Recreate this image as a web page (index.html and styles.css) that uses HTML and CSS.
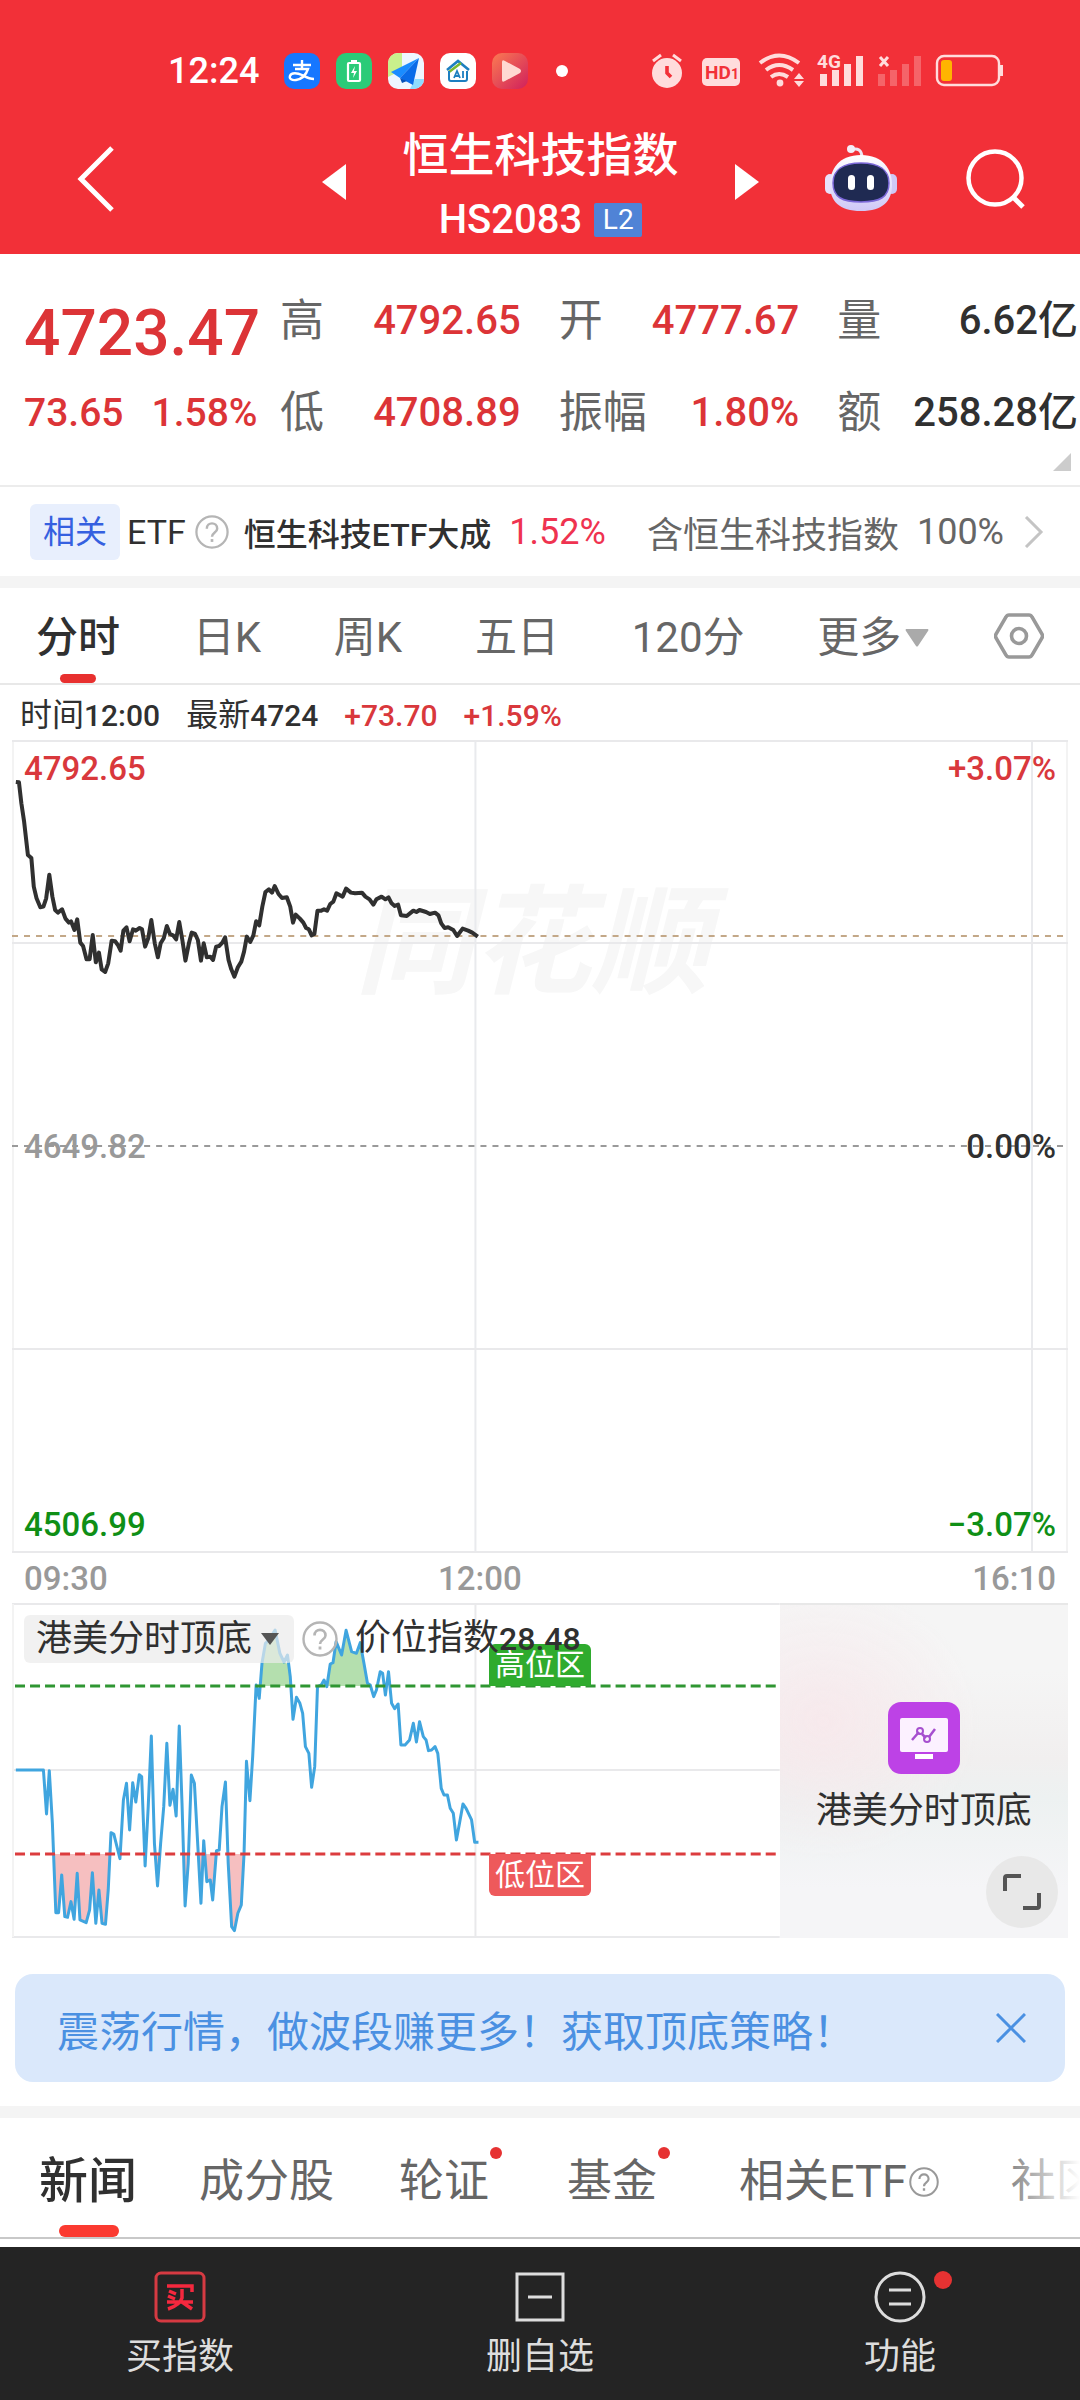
FILE: index.html
```html
<!DOCTYPE html>
<html lang="zh-CN">
<head>
<meta charset="utf-8">
<meta name="viewport" content="width=device-width, initial-scale=1">
<title>恒生科技指数 HS2083</title>
<link rel="stylesheet" href="styles.css">
</head>
<body>
<header class="top">
  <div class="status">
    <span class="clock">12:24</span>
    <div class="apps">
      <svg class="app" viewBox="0 0 36 36"><rect width="36" height="36" rx="10" fill="#1677ff"/><path d="M9 12h18M18 7v9M11 16h13c-2 6-6 10-12 11-4 .6-7-1-6-4 1-4 8-3 12-1 4 2 7 4 12 4" fill="none" stroke="#fff" stroke-width="2.4"/></svg>
      <svg class="app" viewBox="0 0 36 36"><rect width="36" height="36" rx="10" fill="#2bcb78"/><rect x="12" y="10" width="12" height="18" rx="1" fill="none" stroke="#fff" stroke-width="2.2"/><path d="M15 7h6v3h-6zM19 13l-4 7h3l-1 5 4-7h-3z" fill="#fff"/></svg>
      <svg class="app" viewBox="0 0 36 36"><rect width="36" height="36" rx="10" fill="#eef6ff"/><path d="M10 0h4v17L0 24V10A10 10 0 0 1 10 0z" fill="#c9f08c"/><path d="M27 26h9a10 10 0 0 1-10 10h-4z" fill="#8fdcff"/><path d="M31 5 3 19l9 6z" fill="#1a8cff"/><path d="M31 5 12 25l13 7z" fill="#0a6be8"/><path d="m12 25 2 5 5-2z" fill="#0750b8"/></svg>
      <svg class="app" viewBox="0 0 36 36"><rect width="36" height="36" rx="10" fill="#fff"/><path d="m7 17 11-9 11 9" fill="none" stroke="#1d7fc0" stroke-width="2.6"/><path d="m9 19 12-9" stroke="#7ab82e" stroke-width="2.6"/><path d="M9 18v8q0 2 2 2h14q2 0 2-2v-8" fill="none" stroke="#1d7fc0" stroke-width="2"/><path d="m14 25 3-7 3 7m-5-2h4m4-5v7" fill="none" stroke="#1d7fc0" stroke-width="1.8"/></svg>
      <svg class="app" viewBox="0 0 36 36"><defs><linearGradient id="play" x1="0" y1="0" x2="1" y2="1"><stop offset="0" stop-color="#fb7a52"/><stop offset="1" stop-color="#d0205c"/></linearGradient></defs><rect width="36" height="36" rx="10" fill="url(#play)"/><path d="M10 9q0-3 3-1l15 8q2 2 0 4l-15 8q-3 2-3-1z" fill="#ffd9d2"/></svg>
    </div>
    <span class="more-dot"></span>
    <svg class="signals" viewBox="0 0 352 36" fill="#ffdcdc">
      <circle cx="15" cy="20" r="15"/><path d="M1 8l8-6M29 8l-8-6" stroke="#ffdcdc" stroke-width="3"/><path d="M15 13v7l4 4" fill="none" stroke="#f23038" stroke-width="3.6"/>
      <rect x="50" y="5" width="38" height="28" rx="5"/><text x="53" y="26" class="hd">HD</text><text x="79" y="26" class="hd-sub">1</text>
      <g fill="none" stroke="#ffdcdc" stroke-width="4"><path d="M108 10q19-15 39 0M114 17q13-10 27 0M119 24q8-6 17 0"/></g><circle cx="128" cy="30" r="3.4"/><path d="m147 20 5 6h-10zM142 28h10l-5 6z"/>
      <text x="165" y="15" class="net">4G</text><rect x="168" y="21" width="7" height="12"/><rect x="180" y="17" width="7" height="16"/><rect x="192" y="11" width="7" height="22"/><rect x="204" y="3" width="7" height="30"/>
      <path d="m228 4 8 9m0-9-8 9" stroke="#ffdcdc" stroke-width="3"/><g opacity=".3"><rect x="226" y="21" width="7" height="12"/><rect x="238" y="17" width="7" height="16"/><rect x="250" y="11" width="7" height="22"/><rect x="262" y="3" width="7" height="30"/></g>
      <rect x="285" y="3" width="62" height="29" rx="7" fill="none" stroke="#ffdcdc" stroke-width="2.4"/><rect x="289" y="7" width="11" height="21" rx="3" fill="#ffb400"/><path d="M348 12h3v11h-3z"/>
    </svg>
  </div>
  <div class="titlebar">
    <button class="icon-btn back" aria-label="返回"><svg width="40" height="68" viewBox="0 0 40 68"><path d="M36 3 5 34l31 31" fill="none" stroke="#fff" stroke-width="5"/></svg></button>
    <div class="switcher">
      <button class="icon-btn" aria-label="上一个"><svg width="24" height="36" viewBox="0 0 24 36"><path d="M24 0v36L0 18z" fill="#fff"/></svg></button>
      <div class="names"><h1>恒生科技指数</h1><p>HS2083 <span class="level">L2</span></p></div>
      <button class="icon-btn" aria-label="下一个"><svg width="24" height="36" viewBox="0 0 24 36"><path d="M0 0v36l24-18z" fill="#fff"/></svg></button>
    </div>
    <button class="icon-btn robot" aria-label="智能助手"><svg width="72" height="68" viewBox="0 0 72 68"><defs><linearGradient id="shell" x1="0" y1="0" x2="0" y2="1"><stop offset="0" stop-color="#fff"/><stop offset="1" stop-color="#cfc8f7"/></linearGradient></defs><path d="M25 5q12-4 12 8" fill="none" stroke="#eee6f4" stroke-width="3"/><circle cx="26" cy="4" r="4" fill="#f4eef8"/><rect x="0" y="29" width="10" height="20" rx="5" fill="#e8e2fb"/><rect x="62" y="29" width="10" height="20" rx="5" fill="#cfc8f5"/><path d="M36 10c22 0 31 14 31 30S58 66 36 66 5 56 5 40s9-30 31-30z" fill="url(#shell)"/><path d="M36 18c18 0 28 7 28 20 0 14-9 19-28 19S8 52 8 38c0-13 10-20 28-20z" fill="#1f2a52" stroke="#7b68d8" stroke-width="1.5"/><rect x="23" y="30" width="7" height="15" rx="3.500" fill="#fff"/><rect x="42" y="30" width="7" height="15" rx="3.500" fill="#fff"/></svg></button>
    <button class="icon-btn search" aria-label="搜索"><svg width="60" height="60" viewBox="0 0 60 60"><circle cx="29" cy="29" r="26.500" fill="none" stroke="#fff" stroke-width="4.500"/><path d="m46 47 11 11" stroke="#fff" stroke-width="5"/></svg></button>
  </div>
</header>

<main>
  <section class="quote">
    <div class="price">
      <strong>4723.47</strong>
      <p><span>73.65</span><span>1.58%</span></p>
    </div>
    <dl class="stats">
      <div><dt>高</dt><dd>4792.65</dd></div>
      <div><dt>开</dt><dd>4777.67</dd></div>
      <div><dt>量</dt><dd class="dark">6.62亿</dd></div>
      <div><dt>低</dt><dd>4708.89</dd></div>
      <div><dt>振幅</dt><dd>1.80%</dd></div>
      <div><dt>额</dt><dd class="dark">258.28亿</dd></div>
    </dl>
    <span class="corner"></span>
  </section>

  <a class="etf" href="#etf">
    <span class="tag">相关</span>
    <span class="etf-word">ETF</span>
    <svg class="help" viewBox="0 0 36 36"><use href="#help-shape"/></svg>
    <span class="etf-name">恒生科技ETF大成</span>
    <span class="etf-rate">1.52%</span>
    <span class="etf-hold">含恒生科技指数</span>
    <span class="etf-pct">100%</span>
    <svg class="chev" viewBox="0 0 20 32"><path d="m2 1 15 15L2 31" fill="none" stroke="#c4c4c4" stroke-width="3"/></svg>
  </a>

  <nav class="periods">
    <button class="active">分时</button>
    <button>日K</button>
    <button>周K</button>
    <button>五日</button>
    <button>120分</button>
    <button class="more">更多<svg width="24" height="18" viewBox="0 0 24 18"><path d="M1 0h22q1 1 0 2L13 17q-1 1-2 0L1 2Q0 1 1 0z" fill="#aaa"/></svg></button>
    <button class="settings" aria-label="设置"><svg width="50" height="46" viewBox="0 0 50 46"><path d="M15 2h20q2 0 3 2l10 17q1 2 0 4L38 42q-1 2-3 2H15q-2 0-3-2L2 25q-1-2 0-4L12 4q1-2 3-2z" fill="none" stroke="#999" stroke-width="3.600"/><circle cx="25" cy="23" r="7.500" fill="none" stroke="#999" stroke-width="3.600"/></svg></button>
  </nav>

  <p class="readout"><span>时间<b>12:00</b></span><span>最新<b>4724</b></span><span class="up"><b>+73.70</b></span><span class="up"><b>+1.59%</b></span></p>

  <div class="charts">
    <div class="chart">
      <span class="mark">同花顺</span>
      <svg class="plot" viewBox="0 0 1055 813" preserveAspectRatio="none">
        <path d="M1 1v811M1054 1v811" stroke="#f3f3f3" stroke-width="2"/>
        <path d="M463 1v811M1019 1v811" stroke="#e9eaed" stroke-width="2"/>
        <path d="M0 1h1055M0 203h1055M0 609h1055M0 812h1055" stroke="#e9e9eb" stroke-width="2"/>
        <path d="M0 196h1055" stroke="#c3a888" stroke-width="2" stroke-dasharray="6 6"/>
        <path d="M0 406h1055" stroke="#9a9a9a" stroke-width="2" stroke-dasharray="6 6"/>
        <g transform="translate(-12 -10) scale(.3444 .3333)"><path d="M46 156 55 157 62 220 70 275 81 375 91 384 98 470 106 505 117 532 126 530 134 505 143 434 152 500 160 540 168 548 180 538 190 566 200 578 206 574 216 600 224 568 233 638 241 648 251 688 260 688 269 615 278 697 287 668 295 718 305 726 314 700 324 632 334 634 342 645 350 662 358 602 367 592 376 634 386 598 394 602 405 594 412 598 421 650 430 625 439 570 449 640 458 682 466 640 475 625 484 588 493 612 502 616 511 628 520 576 529 630 538 692 548 640 556 608 566 612 574 630 583 692 591 640 600 682 610 680 618 690 627 650 636 648 645 638 653 622 663 690 671 718 680 740 690 712 700 695 708 665 716 620 726 636 735 616 743 574 752 586 761 530 770 486 780 478 789 488 797 468 808 492 818 504 832 502 842 530 850 578 858 554 870 566 880 578 888 594 896 598 904 616 912 612 921 542 932 542 940 538 949 542 958 522 967 515 976 490 994 500 1004 476 1018 488 1030 490 1050 488 1060 500 1072 508 1083 524 1092 508 1107 500 1118 508 1127 502 1136 520 1145 528 1155 524 1163 556 1180 558 1199 542 1208 546 1217 540 1236 546 1247 552 1262 548 1272 556 1280 580 1290 594 1300 592 1315 600 1326 618 1342 596 1358 602 1370 608 1386 620" fill="none" stroke="#303030" stroke-width="4" stroke-linejoin="round" vector-effect="non-scaling-stroke"/></g>
      </svg>
      <div class="scale left"><span class="up">4792.65</span><span class="mid">4649.82</span><span class="down">4506.99</span></div>
      <div class="scale right"><span class="up">+3.07%</span><span>0.00%</span><span class="down">−3.07%</span></div>
    </div>
    <div class="times"><span>09:30</span><span class="noon">12:00</span><span>16:10</span></div>

    <div class="sub">
      <div class="subchart">
        <svg class="plot" viewBox="0 0 767 335" preserveAspectRatio="none">
          <path d="M0 1h767M0 167h767M0 334h767M463 1v333" stroke="#e9e9eb" stroke-width="2"/><path d="M1 1v333" stroke="#f3f3f3" stroke-width="2"/>
          <g transform="translate(-12 -13) scale(.3444 .3333)">
            <path d="M756 288 768 170 780 150 798 120 812 190 826 216 838 225 844 288zM948 288 958 222 966 218 975 155 991 195 1004 121 1020 185 1034 190 1045 158 1055 215 1066 288z" fill="#b4dfae"/>
            <path d="M156 792 162 968 170 968 179 855 188 980 196 982 206 935 215 988 224 850 232 990 250 998 260 960 268 848 278 1000 287 900 296 1000 306 1003 314 900 319 792zM447 792h20l-10 95zM530 792h20l-13 155zM574 792 583 940 591 795zM592 792 600 875 610 870 617 930 626 792zM661 792 666 930 672 1010 680 1022 690 970 700 945 710 792z" fill="#f6bfc0"/>
            <path d="M46 540H126L135 672 143 542 152 700 162 968 170 968 179 855 188 980 196 982 206 935 215 988 224 850 232 990 250 998 260 960 268 848 278 1000 287 900 296 1000 306 1003 314 900 322 728 330 732 348 806 358 630 367 580 376 720 385 578 394 636 404 554 411 560 421 828 430 650 439 438 448 760 457 888 466 760 475 650 484 460 493 646 502 598 511 678 520 408 528 640 537 948 546 820 555 555 564 580 574 770 583 940 591 752 600 875 610 870 617 930 628 782 636 780 644 650 654 576 662 820 672 1010 680 1022 690 970 700 945 708 790 715 514 725 632 733 500 743 285 752 325 760 220 770 160 780 150 798 120 812 190 824 216 834 195 842 260 850 388 860 322 870 340 878 370 886 470 896 490 904 592 913 530 921 290 932 285 940 270 948 290 958 222 966 218 975 155 991 195 1004 121 1020 185 1034 190 1045 158 1055 215 1066 280 1074 285 1084 320 1092 300 1103 245 1110 250 1118 315 1127 245 1136 340 1145 356 1155 342 1163 465 1175 465 1188 450 1199 400 1208 456 1217 395 1228 440 1236 450 1243 482 1252 480 1262 470 1270 490 1280 595 1288 615 1298 615 1306 655 1315 670 1324 750 1333 700 1343 642 1352 655 1368 690 1377 757H1388" fill="none" stroke="#40a5df" stroke-width="3" stroke-linejoin="round" vector-effect="non-scaling-stroke"/>
          </g>
          <path d="M3 83h764" stroke="#2f9632" stroke-width="3" stroke-dasharray="10 5"/>
          <path d="M3 251h764" stroke="#dc3c3e" stroke-width="3" stroke-dasharray="10 5"/>
        </svg>
        <span class="zone high">高位区</span>
        <span class="zone low">低位区</span>
        <div class="indicator">
          <button class="pick">港美分时顶底<svg width="18" height="12" viewBox="0 0 18 12"><path d="M0 0h18L9 12z" fill="#555"/></svg></button>
          <svg class="help" viewBox="0 0 36 36"><use href="#help-shape"/></svg>
          <span>价位指数<b>28.48</b></span>
        </div>
      </div>
      <div class="promo">
        <svg width="72" height="72" viewBox="0 0 72 72"><rect width="72" height="72" rx="13" fill="#bd42e6"/><rect x="12" y="16" width="48" height="34" rx="2" fill="#fcf1ff"/><path d="M27 52h18v5H27z" fill="#fff"/><path d="m24 38 7-8m3 2 4 4m3-1 6-8" fill="none" stroke="#a64fcf" stroke-width="2.500"/><circle cx="32" cy="29" r="3" fill="none" stroke="#a64fcf" stroke-width="2"/><circle cx="39" cy="37" r="3" fill="none" stroke="#a64fcf" stroke-width="2"/></svg>
        <span>港美分时顶底</span>
        <button class="expand" aria-label="全屏"><svg width="38" height="38" viewBox="0 0 38 38"><path d="M18 3H4q-2 0-2 2v13M36 20v13q0 2-2 2H20" fill="none" stroke="#555" stroke-width="4"/></svg></button>
      </div>
    </div>
  </div>

  <div class="banner">
    <a href="#strategy">震荡行情，做波段赚更多！获取顶底策略！</a>
    <button class="icon-btn" aria-label="关闭"><svg width="30" height="30" viewBox="0 0 30 30"><path d="m1 1 28 28M29 1 1 29" stroke="#4a90e2" stroke-width="3"/></svg></button>
  </div>

  <nav class="sections">
    <a class="active" href="#news">新闻</a>
    <a href="#stocks">成分股</a>
    <a class="fresh" href="#warrants">轮证</a>
    <a class="fresh" href="#funds">基金</a>
    <a class="with-help" href="#etf">相关ETF<svg class="help" viewBox="0 0 36 36"><use href="#help-shape"/></svg></a>
    <a href="#community">社区</a>
  </nav>
</main>

<footer class="actions">
  <button><svg width="52" height="52" viewBox="0 0 52 52" fill="none"><rect x="2" y="2" width="48" height="48" rx="5" stroke="#d63a42" stroke-width="3"/><path d="M13 15h25v6M15 20l7 3M14 25l7 3M28 18v9q-2 7-14 11M13 31h26M28 31l10 7" stroke="#f5283e" stroke-width="3.500"/></svg>买指数</button>
  <button><svg width="52" height="52" viewBox="0 0 52 52" fill="none" stroke="#ddd" stroke-width="3"><path d="M3 3h46v46H3zM14 26h24"/></svg>删自选</button>
  <button class="fresh"><svg width="52" height="52" viewBox="0 0 52 52" fill="none" stroke="#ddd" stroke-width="3"><circle cx="26" cy="26" r="24"/><path d="M15 19h22M15 33h22"/></svg>功能</button>
</footer>

<svg class="defs" aria-hidden="true"><defs><g id="help-shape" fill="none" stroke="currentColor"><circle cx="18" cy="18" r="16.500" stroke-width="2.400"/><path d="M12.500 14.500c0-7.500 11-7.500 11 0 0 4-5.500 4-5.500 8.500" stroke-width="2.600"/><path d="M18 25.500v3" stroke-width="2.800"/></g></defs></svg>
</body>
</html>
```
FILE: styles.css
```css
* { box-sizing: border-box; }
body {
  margin: 0;
  background: #fff;
  color: #303030;
  font-family: Roboto, "Noto Sans CJK SC", sans-serif;
  overflow-x: hidden;
}
h1, p, dl, dd { margin: 0; }
button { border: 0; padding: 0; background: none; color: inherit; font: inherit; white-space: nowrap; }
a { color: inherit; text-decoration: none; }
svg { display: block; flex: none; }
b { font-weight: 500; font-size: 30px; }
.defs { position: absolute; width: 0; height: 0; }
.up { color: #d9383c; }
.down { color: #0f8f16; }
.help { width: 36px; height: 36px; color: #b5b5b5; }

/* header */
.top { background: #f23038; color: #fff; padding-top: 46px; }
.status { display: flex; align-items: center; height: 50px; padding: 0 76px 0 168px; }
.clock { font-size: 36px; font-weight: 500; width: 116px; }
.apps { display: flex; gap: 16px; }
.app { width: 36px; height: 36px; }
.more-dot { width: 12px; height: 12px; border-radius: 50%; background: #fff; margin-left: 28px; }
.signals { width: 352px; height: 36px; margin-left: auto; }
.hd { font-size: 19px; font-weight: 700; fill: #f23038; }
.hd-sub { font-size: 14px; font-weight: 700; fill: #f23038; }
.net { font-size: 19px; font-weight: 700; }
.titlebar {
  display: grid;
  grid-template-columns: 322px 1fr 66px 141px 60px;
  align-items: center;
  height: 158px;
  padding: 8px 54px 0 0;
}
.icon-btn { display: flex; align-items: center; justify-content: center; }
.back { justify-content: start; padding-left: 76px; }
.switcher { display: flex; align-items: center; justify-content: space-between; }
.switcher .icon-btn { margin-top: 6px; }
.names { text-align: center; padding-top: 12px; }
.names h1 { font-size: 46px; font-weight: 500; line-height: 70px; }
.names p { display: flex; align-items: center; justify-content: center; gap: 12px; font-size: 40px; font-weight: 500; line-height: 60px; }
.level { background: #5083d6; font-size: 28px; font-weight: 400; line-height: 34px; width: 48px; border-radius: 2px; }
.robot { grid-column: 4; justify-content: start; }
.search { justify-content: end; }

/* quote */
.quote { position: relative; display: flex; padding: 34px 2px 39px 24px; color: #dc3437; }
.price { width: 256px; flex: none; }
.price strong { display: block; font-size: 64px; font-weight: 500; line-height: 92px; }
.price p { display: flex; gap: 28px; font-size: 39px; font-weight: 500; line-height: 66px; }
.stats { flex: 1; display: grid; grid-template-columns: repeat(3, 1fr); column-gap: 38px; }
.stats div { display: flex; justify-content: space-between; align-items: center; height: 66px; margin-bottom: 26px; white-space: nowrap; }
.stats div:nth-child(n + 4) { margin-bottom: 0; }
.stats dt { font-size: 44px; color: #666; line-height: 66px; }
.stats dd { font-size: 40px; font-weight: 500; line-height: 66px; }
.stats .dark { color: #303030; }
.corner { position: absolute; right: 9px; bottom: 14px; border: 9px solid transparent; border-right-color: #ccc; border-bottom-color: #ccc; }

/* related fund */
.etf { display: flex; align-items: center; height: 91px; padding: 0 36px 0 30px; border-top: 2px solid #ececec; white-space: nowrap; font-size: 36px; color: #666; }
.tag { background: #e8effd; color: #3560e0; font-size: 32px; line-height: 56px; padding: 0 13px; border-radius: 6px; margin-right: 7px; }
.etf-word { font-size: 34px; color: #303030; margin-right: 9px; }
.etf .help { width: 34px; height: 34px; margin-right: 15px; }
.etf-name { font-size: 32px; font-weight: 500; color: #303030; }
.etf-rate { color: #ef3350; margin: 0 auto 0 18px; }
.etf-pct { margin: 0 20px 0 18px; }
.chev { width: 20px; height: 32px; }

/* period tabs */
.periods { display: flex; justify-content: space-between; align-items: center; height: 109px; padding: 0 36px; border-top: 12px solid #f4f4f4; border-bottom: 2px solid #e8e8e8; font-size: 42px; color: #666; }
.periods button { position: relative; height: 95px; line-height: 90px; padding-top: 5px; }
.periods .active { color: #303030; font-weight: 500; }
.periods .active::after { content: ""; position: absolute; left: 50%; bottom: 0; width: 36px; height: 9px; margin-left: -18px; border-radius: 5px; background: #e8302f; }
.periods .more { display: flex; align-items: center; gap: 4px; }
.periods .settings { padding-top: 0; margin-left: -8px; }

.readout { display: flex; gap: 26px; padding-left: 20px; font-size: 32px; line-height: 60px; height: 55px; }

/* charts */
.charts { padding: 0 12px; }
.chart { position: relative; height: 813px; }
.plot { position: absolute; inset: 0; width: 100%; height: 100%; }
.mark { position: absolute; inset: 0; height: 408px; line-height: 408px; padding-right: 16px; text-align: center; font-size: 118px; font-weight: 700; font-style: italic; color: #f7f7f7; }
.scale { position: absolute; top: 9px; bottom: 8px; display: flex; flex-direction: column; justify-content: space-between; font-size: 33px; font-weight: 500; line-height: 40px; }
.scale.left { left: 12px; }
.scale.right { right: 12px; text-align: right; }
.scale .mid { color: #999; }
.times { display: grid; grid-template-columns: 1fr 1fr 1fr; height: 50px; padding: 0 12px; font-size: 33px; font-weight: 500; line-height: 52px; color: #999; }
.times .noon { text-align: left; padding-left: 70px; }
.times span:last-child { text-align: right; }
.sub { display: flex; height: 335px; }
.subchart { position: relative; flex: 767 0 0; }
.zone { position: absolute; left: 477px; width: 102px; text-align: center; font-size: 30px; line-height: 42px; height: 42px; color: #fff; }
.high { top: 41px; background: #2fab2e; border-radius: 6px 6px 0 0; }
.low { top: 251px; background: #ee595b; border-radius: 0 0 6px 6px; }
.indicator { position: absolute; top: 11px; left: 12px; display: flex; align-items: center; font-size: 36px; line-height: 48px; white-space: nowrap; }
.indicator b { font-size: 32px; }
.indicator .help { margin: 0 17px 0 8px; }
.pick { display: flex; align-items: center; gap: 9px; background: rgba(235, 235, 235, .7); border-radius: 6px; padding: 0 15px 0 12px; }
.promo { position: relative; flex: 288 0 0; display: flex; flex-direction: column; align-items: center; padding-top: 97px; font-size: 36px; line-height: 52px; gap: 11px; background: radial-gradient(ellipse at 15% 35%, #f7e9ec, transparent 45%), linear-gradient(#f5f5f5 20%, #f1efef 46%, #edf1f1 58%, #f5f5f7 85%); border-top: 2px solid #e8e8e8; }
.expand { position: absolute; right: 10px; bottom: 10px; width: 72px; height: 72px; border-radius: 50%; background: #e8e8e8; display: flex; align-items: center; justify-content: center; }

/* banner */
.banner { display: flex; justify-content: space-between; align-items: center; height: 108px; margin: 36px 15px 24px; padding: 0 39px 0 42px; border-radius: 18px; background: #dae8fb; color: #4a90e2; font-size: 42px; white-space: nowrap; }

/* content tabs */
.sections { position: relative; display: flex; align-items: center; height: 133px; padding-left: 39px; border-top: 12px solid #f4f4f4; border-bottom: 2px solid #c8c8c8; margin-bottom: 8px; font-size: 45px; color: #666; white-space: nowrap; overflow: hidden; }
.sections a { position: relative; height: 119px; margin-right: 65px; padding-top: 8px; line-height: 111px; }
.sections a:nth-child(3) { margin-right: 78px; }
.sections a:nth-child(4) { margin-right: 82px; }
.sections .active { font-size: 49px; font-weight: 500; color: #303030; margin-right: 62px; }
.sections .active::after { content: ""; position: absolute; left: 20px; bottom: 0; width: 60px; height: 12px; border-radius: 6px; background: #fb3a30; }
.sections .with-help { display: flex; align-items: center; gap: 2px; margin-right: 72px; }
.sections .help { width: 30px; height: 30px; color: #999; }
.sections .fresh::after { content: ""; position: absolute; right: -13px; top: 29px; width: 12px; height: 12px; border-radius: 50%; background: #e63232; }
.sections::after { content: ""; position: absolute; right: 0; top: 0; width: 90px; height: 119px; background: linear-gradient(to right, transparent, #fff); }

/* bottom actions */
.actions { display: flex; background: #242424; color: #ddd; height: 153px; padding-top: 24px; }
.actions button { position: relative; flex: 1; display: flex; flex-direction: column; align-items: center; gap: 8px; font-size: 36px; line-height: 52px; }
.actions .fresh::after { content: ""; position: absolute; left: 50%; top: 0; width: 18px; height: 18px; margin-left: 34px; border-radius: 50%; background: #e63232; }
```
